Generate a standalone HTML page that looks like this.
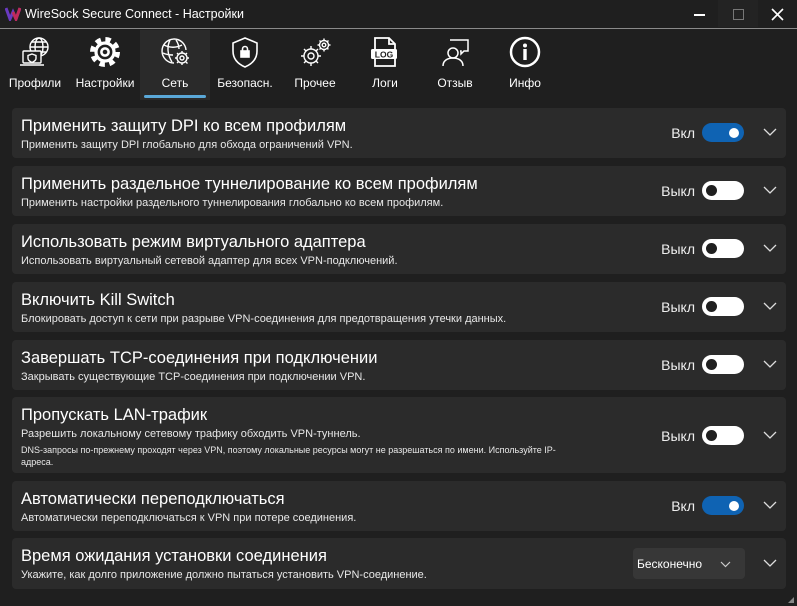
<!DOCTYPE html>
<html><head><meta charset="utf-8"><style>
*{box-sizing:border-box;margin:0;padding:0}
body{width:797px;height:606px;background:#1f1f1f;font-family:"Liberation Sans","Noto Sans CJK SC",sans-serif;color:#fff;position:relative;overflow:hidden}
.title{position:absolute;left:0;top:0;width:797px;height:29px;border-bottom:1px solid #8a8a8a;background:#1f1f1f}
.title .t{position:absolute;left:25px;top:7px;font-size:12.5px;color:#fff}
.tabs{position:absolute;top:30px;left:0;height:70px;width:797px}
.tab{position:absolute;top:0;width:70px;height:70px;text-align:center}
.tab.sel{background:#2a2a2a}
.tab svg{position:absolute;left:19px;top:6px}
.tab span{position:absolute;left:0;right:0;top:46px;font-size:12px;color:#fff}
.ul{position:absolute;left:144px;top:95px;width:62px;height:3px;border-radius:2px;background:#5aa8d8}
.card{position:absolute;left:12px;width:774px;background:#2b2b2b;border-radius:4px}
.card h3{position:absolute;left:9px;top:9px;font-weight:normal;font-size:16.5px;color:#fff;white-space:nowrap}
.card p{position:absolute;left:9px;top:31px;font-size:11px;color:#e8e8e8;white-space:nowrap}
.lbl{position:absolute;right:91px;font-size:14px;color:#eee}
.tg{position:absolute;left:690px;width:42px;height:19px;border-radius:10px}
.on{background:#0f63b3}
.on::after{content:"";position:absolute;right:5px;top:4.5px;width:10px;height:10px;border-radius:50%;background:#fff}
.off{background:#fff}
.off::after{content:"";position:absolute;left:4px;top:4px;width:11px;height:11px;border-radius:50%;background:#1f1f1f}
.chev{position:absolute;left:751px}
</style></head><body>
<div class="title">
<svg style="position:absolute;left:5px;top:7px" width="16" height="14" viewBox="0 0 16 14"><path d="M1 1 L5 12 L8 5 L11 12 L15 1" fill="none" stroke="#6a3ac0" stroke-width="3"/><path d="M8 5 L11 12 L15 1" fill="none" stroke="#c02a5a" stroke-width="3"/></svg>
<div class="t">WireSock Secure Connect - Настройки</div>
<div style="position:absolute;left:694px;top:14px;width:11px;height:1.5px;background:#fff"></div>
<div style="position:absolute;left:718px;top:0;width:40px;height:27px;background:#232323"></div>
<div style="position:absolute;left:733px;top:9px;width:11px;height:11px;border:1.3px solid #777"></div>
<svg style="position:absolute;left:771px;top:8px" width="13" height="13"><path d="M1 1L12 12M12 1L1 12" stroke="#fff" stroke-width="1.6"/></svg>
</div>
<div class="tabs">
<div class="tab" style="left:0"><svg width="32" height="32" viewBox="0 0 32 32" fill="none" stroke="#fff" stroke-width="1.4"><circle cx="20" cy="11" r="9"/><ellipse cx="20" cy="11" rx="4" ry="9"/><path d="M11 11h18M13 6h14M13 16h14"/><rect x="4" y="15" width="18" height="12" rx="1" fill="#1f1f1f"/><path d="M1 29h24"/><path d="M13 18l4 1.5v3c0 2-2 3-4 4-2-1-4-2-4-4v-3z"/></svg><span>Профили</span></div>
<div class="tab" style="left:70px"><svg width="32" height="32" viewBox="0 0 32 32" fill="none" stroke="#fff"><circle cx="16" cy="16" r="12.5" stroke-width="5" stroke-dasharray="5.3 4.52"/><circle cx="16" cy="16" r="9" stroke-width="3.2"/><circle cx="16" cy="16" r="3.6" stroke-width="2.6"/></svg><span>Настройки</span></div>
<div class="tab sel" style="left:140px"><svg width="32" height="32" viewBox="0 0 32 32" fill="none" stroke="#fff" stroke-width="1.4"><path d="M15 27a12 12 0 1 1 12-13"/><path d="M5 9c6 3 12 3 18 0M4 17c4 2 7 2 10 2M11 4c-3 6-3 14 2 22M17 4c2 3 3 6 3 9"/><circle cx="23" cy="22" r="5"/><circle cx="23" cy="22" r="2"/><path d="M23 15v2M23 27v2M16 22h2M28 22h2M18 17l1.5 1.5M27 26l1.5 1.5M28 17l-1.5 1.5M18 27l1.5-1.5"/></svg><span>Сеть</span></div>
<div class="tab" style="left:210px"><svg width="32" height="32" viewBox="0 0 32 32" fill="none" stroke="#fff" stroke-width="1.6"><path d="M16 2l12 5v8c0 8-5 13-12 16C9 28 4 23 4 15V7z"/><rect x="12" y="15" width="8" height="6" fill="#fff"/><path d="M13.5 15v-2a2.5 2.5 0 0 1 5 0v2"/></svg><span>Безопасн.</span></div>
<div class="tab" style="left:280px"><svg width="34" height="32" viewBox="0 0 34 32" fill="none" stroke="#fff" stroke-width="1.4"><circle cx="12" cy="20" r="7"/><circle cx="12" cy="20" r="3"/><path d="M12 10v3M12 27v3M2 20h3M19 20h3M5 13l2 2M17 25l2 2M19 13l-2 2M5 27l2-2"/><circle cx="25" cy="9" r="4.5"/><circle cx="25" cy="9" r="1.8"/><path d="M25 2.5v2M25 13.5v2M18.5 9h2M29.5 9h2M20.5 4.5l1.4 1.4M28 12l1.4 1.4M29.5 4.5l-1.4 1.4M20.5 13.5l1.4-1.4"/></svg><span>Прочее</span></div>
<div class="tab" style="left:350px"><svg width="32" height="32" viewBox="0 0 32 32" fill="none" stroke="#fff" stroke-width="1.8"><path d="M6 2h14l6 6v22H6z"/><path d="M20 2v6h6"/><rect x="2" y="13" width="26" height="10" rx="1.5" fill="#fff" stroke="none"/><text x="15" y="21.5" fill="#1f1f1f" stroke="none" font-size="8.5" font-weight="bold" text-anchor="middle" font-family="Liberation Sans">LOG</text></svg><span>Логи</span></div>
<div class="tab" style="left:420px"><svg width="32" height="32" viewBox="0 0 32 32" fill="none" stroke="#fff" stroke-width="1.5"><path d="M11 4h18v11h-4l-3 3v-3h-1"/><circle cx="14" cy="17" r="5"/><path d="M4 30c0-5 4-8 10-8s10 3 10 8"/></svg><span>Отзыв</span></div>
<div class="tab" style="left:490px"><svg width="32" height="32" viewBox="0 0 32 32"><circle cx="16" cy="16" r="14" fill="none" stroke="#fff" stroke-width="2.5"/><circle cx="16" cy="9.5" r="2" fill="#fff"/><rect x="14.3" y="13" width="3.4" height="11" fill="#fff"/></svg><span>Инфо</span></div>
</div>
<div class="ul"></div>

<div class="card" style="top:108px;height:50px"><h3>Применить защиту DPI ко всем профилям</h3><p>Применить защиту DPI глобально для обхода ограничений VPN.</p><span class="lbl" style="top:17px">Вкл</span><div class="tg on" style="top:15px"></div><svg class="chev" style="top:20px" width="14" height="8"><path d="M1 1l6 6 6-6" fill="none" stroke="#ddd" stroke-width="1.3"/></svg></div>
<div class="card" style="top:166px;height:50px"><h3>Применить раздельное туннелирование ко всем профилям</h3><p>Применить настройки раздельного туннелирования глобально ко всем профилям.</p><span class="lbl" style="top:17px">Выкл</span><div class="tg off" style="top:15px"></div><svg class="chev" style="top:20px" width="14" height="8"><path d="M1 1l6 6 6-6" fill="none" stroke="#ddd" stroke-width="1.3"/></svg></div>
<div class="card" style="top:224px;height:50px"><h3>Использовать режим виртуального адаптера</h3><p>Использовать виртуальный сетевой адаптер для всех VPN-подключений.</p><span class="lbl" style="top:17px">Выкл</span><div class="tg off" style="top:15px"></div><svg class="chev" style="top:20px" width="14" height="8"><path d="M1 1l6 6 6-6" fill="none" stroke="#ddd" stroke-width="1.3"/></svg></div>
<div class="card" style="top:282px;height:50px"><h3>Включить Kill Switch</h3><p>Блокировать доступ к сети при разрыве VPN-соединения для предотвращения утечки данных.</p><span class="lbl" style="top:17px">Выкл</span><div class="tg off" style="top:15px"></div><svg class="chev" style="top:20px" width="14" height="8"><path d="M1 1l6 6 6-6" fill="none" stroke="#ddd" stroke-width="1.3"/></svg></div>
<div class="card" style="top:340px;height:50px"><h3>Завершать TCP-соединения при подключении</h3><p>Закрывать существующие TCP-соединения при подключении VPN.</p><span class="lbl" style="top:17px">Выкл</span><div class="tg off" style="top:15px"></div><svg class="chev" style="top:20px" width="14" height="8"><path d="M1 1l6 6 6-6" fill="none" stroke="#ddd" stroke-width="1.3"/></svg></div>
<div class="card" style="top:397px;height:76px"><h3>Пропускать LAN-трафик</h3><p>Разрешить локальному сетевому трафику обходить VPN-туннель.</p><p style="top:47px;font-size:9px;line-height:12px;white-space:normal;width:560px">DNS-запросы по-прежнему проходят через VPN, поэтому локальные ресурсы могут не разрешаться по имени. Используйте IP-адреса.</p><span class="lbl" style="top:31px">Выкл</span><div class="tg off" style="top:29px"></div><svg class="chev" style="top:34px" width="14" height="8"><path d="M1 1l6 6 6-6" fill="none" stroke="#ddd" stroke-width="1.3"/></svg></div>
<div class="card" style="top:481px;height:50px"><h3>Автоматически переподключаться</h3><p>Автоматически переподключаться к VPN при потере соединения.</p><span class="lbl" style="top:17px">Вкл</span><div class="tg on" style="top:15px"></div><svg class="chev" style="top:20px" width="14" height="8"><path d="M1 1l6 6 6-6" fill="none" stroke="#ddd" stroke-width="1.3"/></svg></div>
<div class="card" style="top:538px;height:51px"><h3>Время ожидания установки соединения</h3><p>Укажите, как долго приложение должно пытаться установить VPN-соединение.</p>
<div style="position:absolute;left:621px;top:10px;width:112px;height:31px;background:#373737;border-radius:4px"><span style="position:absolute;left:4px;top:9px;font-size:12px;color:#fff">Бесконечно</span><svg style="position:absolute;left:87px;top:13px" width="11" height="7"><path d="M1 1l4.5 4.5L10 1" fill="none" stroke="#ccc" stroke-width="1.2"/></svg></div>
<svg class="chev" style="top:21px" width="14" height="8"><path d="M1 1l6 6 6-6" fill="none" stroke="#ddd" stroke-width="1.3"/></svg></div>
<svg style="position:absolute;left:787px;top:596px" width="8" height="8"><path d="M7 1V7H1z" fill="#888"/></svg>
</body></html>
